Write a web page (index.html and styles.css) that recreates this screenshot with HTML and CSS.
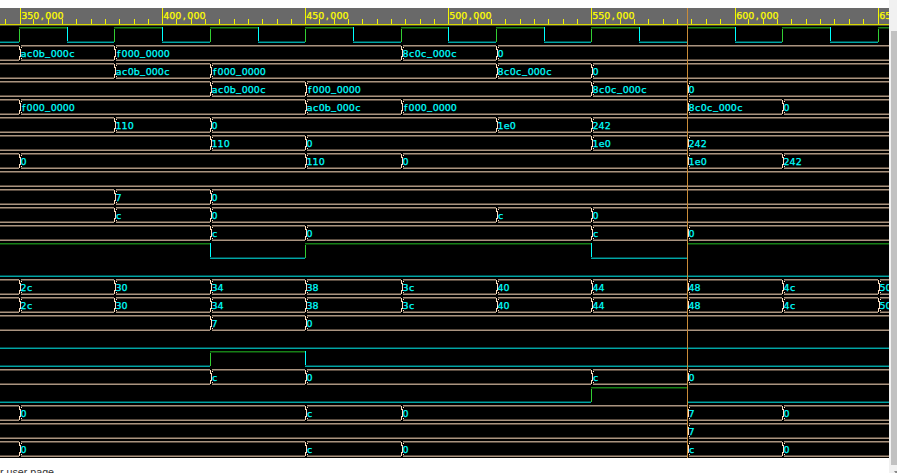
FILE: index.html
```
<!DOCTYPE html>
<html lang="en">
<head>
<meta charset="utf-8">
<title>Waveform</title>
<link rel="stylesheet" href="styles.css">
</head>
<body>
<div class="page">
  <main class="content">
    <div class="wave" id="wave"></div>
    <p class="footnote">r user page</p>
  </main>
  <aside class="scrollbar">
    <div class="thumb"></div>
    <svg class="arrow" width="8" height="8" viewBox="0 0 8 8"><path d="M3 6h6l-3 4z"/></svg>
  </aside>
</div>
<script src="wave.js"></script>
</body>
</html>
```
FILE: styles.css
```
* { box-sizing: border-box; }
body { margin: 0; background: #fff; overflow: hidden; }
.page { display: flex; height: 473px; overflow: hidden; }
.content { width: 889px; padding-top: 8px; overflow: hidden; }
.wave { position: relative; height: 450px; background: #000; }
.wave svg { display: block; width: 889px; shape-rendering: crispEdges; }
.wave text { font: 9.5px "DejaVu Sans", sans-serif; text-anchor: middle; stroke-width: .25; }
.ruler { height: 18px; background: #000; }
.row { height: 18px; }
.grey { fill: #696969; }
.tick { fill: #f5f500; }
.base { fill: #d6d600; }
.base-dim { fill: #555530; }
.wave .time { fill: #ffff00; stroke: #ffff00; }
.wave .value { fill: #00ffff; stroke: #00ffff; }
.bus { fill: #aa9480; }
.bus-dim { fill: #594b3f; }
.cross { stroke: #ffdfc0; stroke-width: 1; fill: none; }
.high { fill: #168016; }
.high-dim { fill: #0c400c; }
.low { fill: #00a5a5; }
.low-dim { fill: #004c4c; }
.rise { fill: #32cd32; }
.fall { fill: #00ffff; }
.cursor { position: absolute; left: 687px; top: 0; width: 1px; height: 450px; background: #c98b38; }
.footnote { margin: 6px 0 0; font: 10.7px/16px "Liberation Sans", Arial, sans-serif; color: #333; white-space: nowrap; }
.scrollbar { width: 8px; height: 473px; background: #f1f1f1; padding: 31px 0 0 2px; overflow: hidden; }
.thumb { height: 434px; background: #c1c1c1; }
.arrow { display: block; fill: #888; }
```
FILE: wave.js
```
const END = 889;
const PITCH = 6.02;
// x positions of the clock's rising edges
const E = [19, 114, 210, 305, 401, 496, 591, 687, 782, 878];
const rect = (c, x, y, w, h) => `<rect class="${c}" x="${x}" y="${y}" width="${w}" height="${h}"/>`;
const svg = (c, body) => `<svg class="${c}" height="18">${body}</svg>`;

// Sets each character in the middle of a fixed-width cell
function mono(c, x, y, str) {
  const chars = [...str];
  const xs = chars.map((_, i) => (x + PITCH * (i + .5)).toFixed(2)).join(" ");
  const ys = chars.map(ch => ch === "_" ? y - 1 : y).join(" ");
  return `<text class="${c}" x="${xs}" y="${ys}">${str}</text>`;
}

function ruler() {
  let s = rect("grey", 0, 0, END, 16) + rect("base", 0, 16, END, 1) + rect("base-dim", 0, 17, END, 1);
  for (let i = -1; i < 61; i++) {
    if (i % 10) s += rect("tick", Math.floor(19.65 + 14.3 * i), 11, 1, 5);
  }
  [20, 162, 305, 448, 591, 735, 878].forEach((x, i) => {
    s += rect("tick", x, 0, 1, 16);
    s += mono("time", x + 1.3, 11, `${350 + 50 * i},000`);
  });
  return svg("ruler", s);
}

function bus(changes) {
  let s = "", labels = "", from = 0;
  const span = (a, b) => rect("bus", a, 1, b - a, 1) + rect("bus-dim", a, 2, b - a, 1) +
    rect("bus-dim", a, 15, b - a, 1) + rect("bus", a, 16, b - a, 1);
  for (const [i, label] of changes) {
    const x = E[i];
    s += span(from, x);
    from = x + 2;
    s += `<path class="cross" d="M${x + .5} 2V6M${x + 1.5} 5V13M${x + .5} 12V16M${x + 2.5} 2V4M${x + 2.5} 14V16"/>`;
    labels += mono("value", x + 1.6, 13, label);
  }
  return svg("row", s + span(from, END) + labels);
}

function bit(level, flips) {
  let s = "", from = 0;
  for (const x of [...flips, END]) {
    s += level ? rect("high", from, 1, x - from, 1) + rect("high-dim", from, 2, x - from, 1)
               : rect("low-dim", from, 15, x - from, 1) + rect("low", from, 16, x - from, 1);
    if (x < END) s += rect(level ? "fall" : "rise", x, 1, 1, 15);
    level = !level;
    from = x;
  }
  return svg("row", s);
}

const A = "ac0b_000c", F = "f000_0000", C = "8c0c_000c";
const pc = ["2c", "30", "34", "38", "3c", "40", "44", "48", "4c", "50"].map((v, i) => [i, v]);
document.getElementById("wave").innerHTML = [
  ruler(),
  bit(false, [19, 67, 114, 162, 210, 258, 305, 353, 401, 448, 496, 544, 591, 639, 687, 735, 782, 830, 878]),
  bus([[0, A], [1, F], [4, C], [5, "0"]]),
  bus([[1, A], [2, F], [5, C], [6, "0"]]),
  bus([[2, A], [3, F], [6, C], [7, "0"]]),
  bus([[0, F], [3, A], [4, F], [7, C], [8, "0"]]),
  bus([[1, "110"], [2, "0"], [5, "1e0"], [6, "242"]]),
  bus([[2, "110"], [3, "0"], [6, "1e0"], [7, "242"]]),
  bus([[0, "0"], [3, "110"], [4, "0"], [7, "1e0"], [8, "242"]]),
  bus([]),
  bus([[1, "7"], [2, "0"]]),
  bus([[1, "c"], [2, "0"], [5, "c"], [6, "0"]]),
  bus([[2, "c"], [3, "0"], [6, "c"], [7, "0"]]),
  bit(true, [210, 305, 591, 687]),
  bit(false, []),
  bus(pc),
  bus(pc),
  bus([[2, "7"], [3, "0"]]),
  bit(false, []),
  bit(false, [210, 305]),
  bus([[2, "c"], [3, "0"], [6, "c"], [7, "0"]]),
  bit(false, [591, 687]),
  bus([[0, "0"], [3, "c"], [4, "0"], [7, "7"], [8, "0"]]),
  bus([[7, "7"]]),
  bus([[0, "0"], [3, "c"], [4, "0"], [7, "c"], [8, "0"]]),
  '<div class="cursor"></div>'
].join("");
```
